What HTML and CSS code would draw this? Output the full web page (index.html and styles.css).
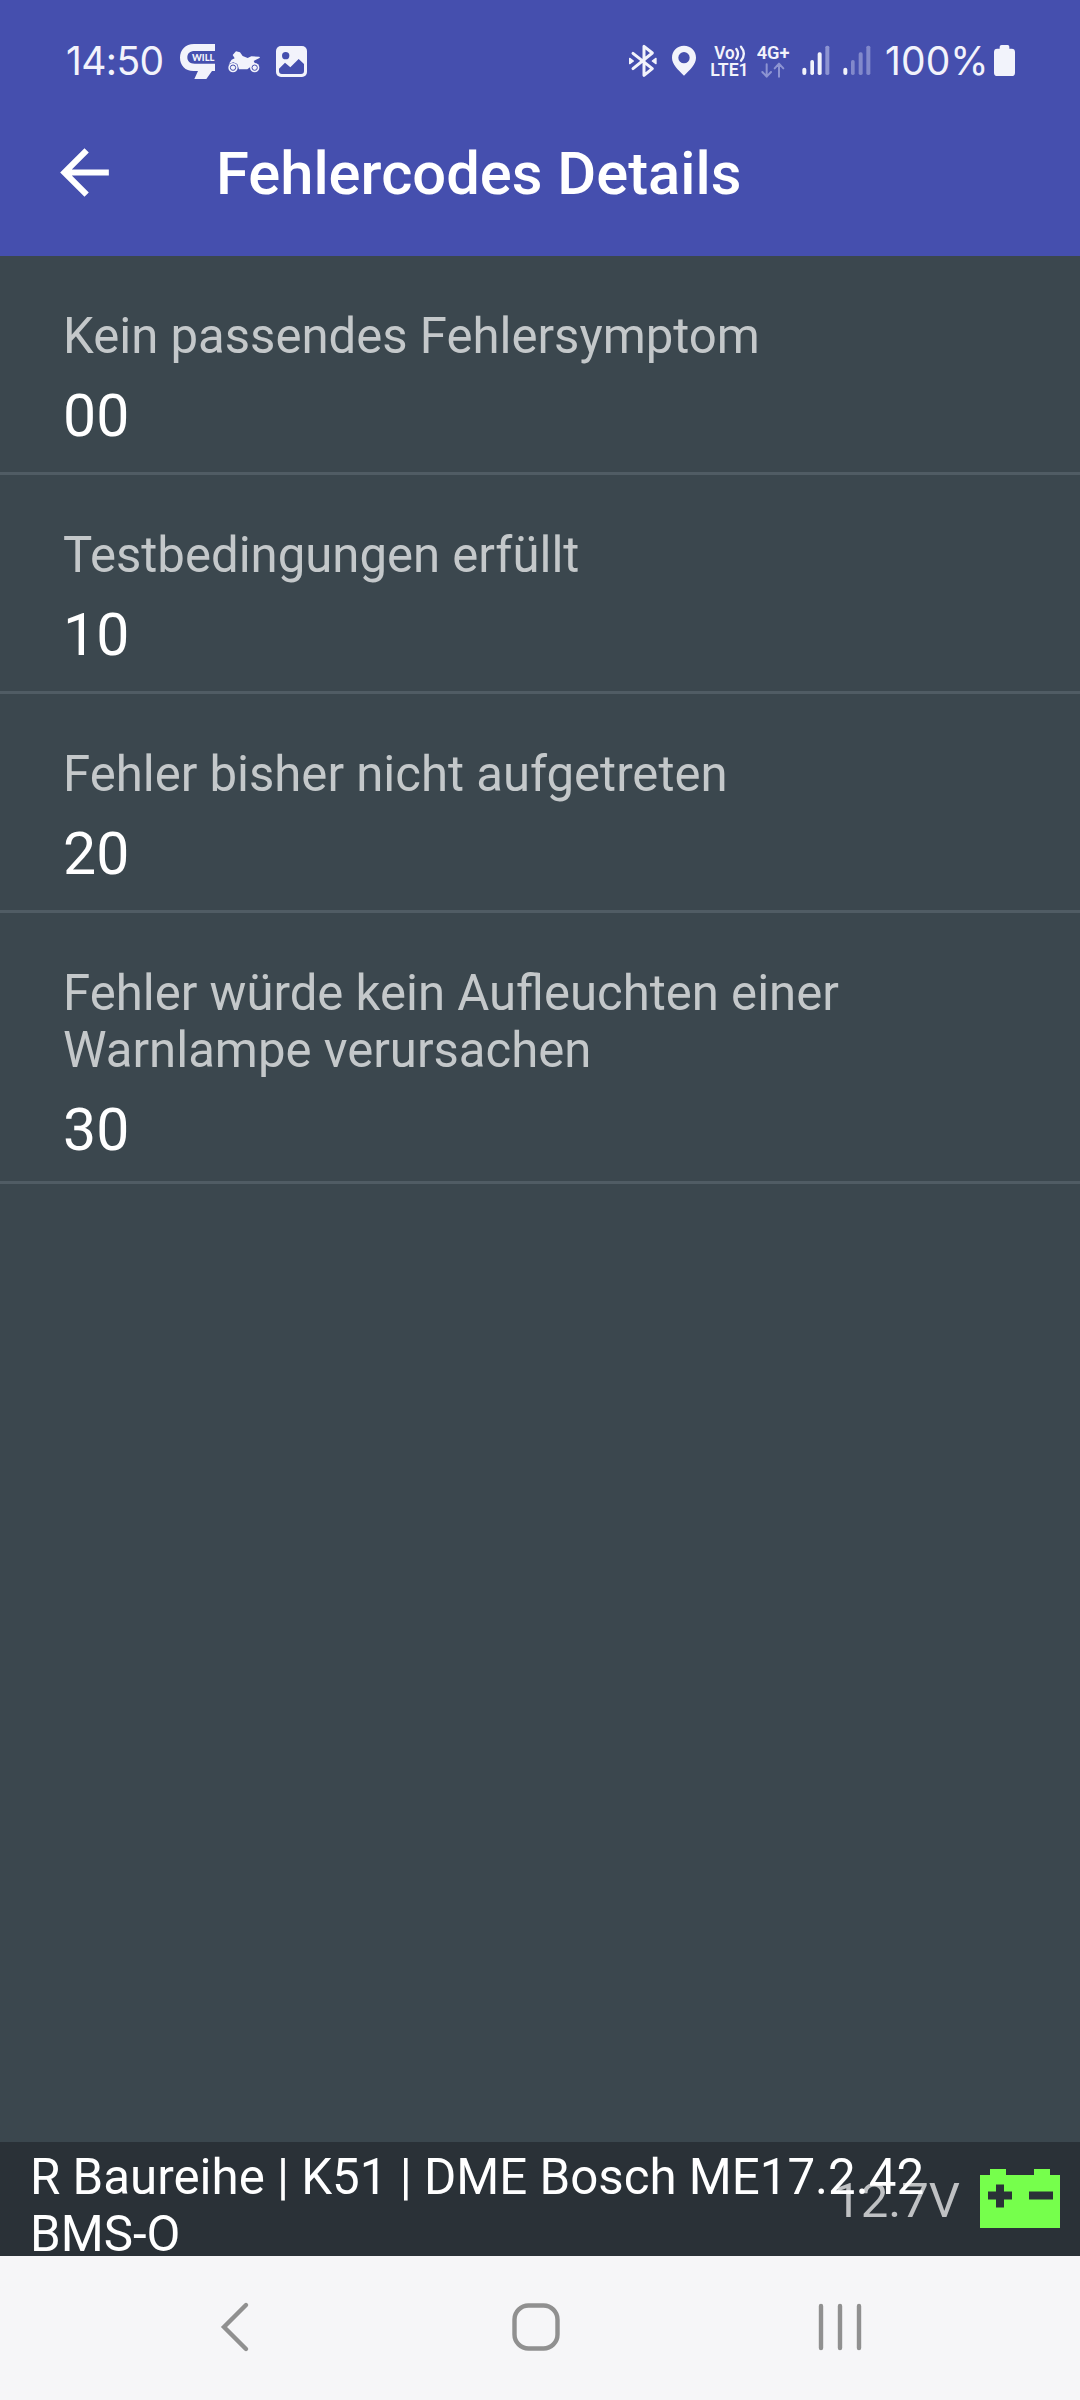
FILE: index.html
```html
<!DOCTYPE html>
<html lang="de">
<head>
<meta charset="utf-8">
<title>Fehlercodes Details</title>
<link rel="stylesheet" href="styles.css">
</head>
<body>
<div class="screen">
  <header class="header">
    <div class="status">
      <div class="status-group">
        <span class="clock">14:50</span>
        <svg class="icon-will" viewBox="420 0 105 240">
          <path fill="#f2f3fb" d="M525 72H462C436 72 420 90 420 113S436 153 460 153H474L463 177H499L516 153H525V131H464C450 131 442 124 442 112S450 93 464 93H525Z"/>
          <text class="will-text" x="456" y="122" textLength="67" lengthAdjust="spacingAndGlyphs">WILL</text>
        </svg>
        <svg class="icon-bike" viewBox="564 0 96 240">
          <g fill="#f2f3fb">
            <path d="M578 105L588 94L600 97L608 108L623 114L634 109L658 110L660 113L641 123L647 134L632 140L622 148H597L592 132L580 127L567 131L575 119L584 115Z"/>
            <circle cx="579" cy="143" r="14"/><circle cx="644" cy="143" r="14"/>
          </g>
          <g fill="none" stroke="#454fae" stroke-width="3"><circle cx="579" cy="143" r="8"/><circle cx="644" cy="143" r="8"/></g>
        </svg>
        <svg class="icon-photo" viewBox="708 0 93 240">
          <rect x="708" y="78" width="93" height="93" rx="15" fill="#f2f3fb"/>
          <circle cx="737" cy="107" r="11" fill="#454fae"/>
          <path fill="#454fae" d="M717 146L735 128L751 142L776 117L792 132V153Q792 162 783 162H726Q717 162 717 153Z"/>
        </svg>
      </div>
      <div class="status-group">
        <svg class="icon-bt" viewBox="52 0 90 240">
          <path fill="none" stroke="#f2f3fb" stroke-width="9" stroke-linejoin="round" stroke-linecap="round" d="M67 100L125 146L100 166V79L125 99L67 146"/>
          <path fill="#f2f3fb" stroke="#f2f3fb" stroke-width="4" stroke-linejoin="round" d="M57 115L68 123L57 131ZM136 115L125 123L136 131Z"/>
        </svg>
        <svg class="icon-pin" viewBox="186 0 72 240">
          <path fill="#f2f3fb" fill-rule="evenodd" d="M222 77C201 77 186 93 186 113C186 133 204 149 222 167C240 149 258 133 258 113C258 93 243 77 222 77ZM222 96A17 17 0 1 1 222 130A17 17 0 1 1 222 96Z"/>
        </svg>
        <svg class="icon-volte" viewBox="303 0 111 240">
          <text class="net-text" x="313" y="118" textLength="61" lengthAdjust="spacingAndGlyphs">Vo</text>
          <path fill="none" stroke="#f2f3fb" stroke-width="7" stroke-linecap="round" d="M379 87Q389 101 379 116M393 80Q410 101 393 122"/>
          <text class="net-text" x="301" y="169" textLength="115" lengthAdjust="spacingAndGlyphs">LTE1</text>
        </svg>
        <svg class="icon-4g" viewBox="441 0 99 240">
          <text class="net-text" x="440" y="118" textLength="99" lengthAdjust="spacingAndGlyphs">4G+</text>
          <path fill="none" stroke="#8d94d2" stroke-width="6" stroke-linecap="round" stroke-linejoin="round" d="M470 133V169M457 156L470 170L483 156M507 170V132M494 145L507 131L520 145"/>
        </svg>
        <svg class="icon-signal" viewBox="575 0 84 240">
          <g fill="#f2f3fb"><rect x="576" y="143" width="12" height="22" rx="6"/><rect x="600" y="120" width="11" height="45" rx="5"/><rect x="622" y="97" width="12" height="68" rx="5"/></g>
          <rect x="645" y="77" width="12" height="88" rx="5" fill="#8d94d2"/>
        </svg>
        <svg class="icon-signal signal-two" viewBox="698 0 84 240">
          <rect x="699" y="143" width="12" height="22" rx="6" fill="#f2f3fb"/>
          <g fill="#8289cb"><rect x="722" y="120" width="11" height="45" rx="5"/><rect x="745" y="97" width="12" height="68" rx="5"/><rect x="768" y="77" width="12" height="88" rx="5"/></g>
        </svg>
        <span class="percent">100%</span>
        <svg class="icon-batt" viewBox="642 0 63 240">
          <path fill="#f2f3fb" d="M659 80Q659 75 665 75H683Q688 75 688 80V86H695Q705 86 705 96V158Q705 168 695 168H652Q642 168 642 158V96Q642 86 652 86H659Z"/>
        </svg>
      </div>
    </div>
    <div class="toolbar">
      <svg class="back" viewBox="0 0 24 24"><path fill="#fff" d="M20 11H7.83l5.59-5.59L12 4l-8 8 8 8 1.41-1.41L7.83 13H20v-2z"/></svg>
      <h1 class="title">Fehlercodes Details</h1>
    </div>
  </header>
  <main class="list">
    <section class="row"><p class="label">Kein passendes Fehlersymptom</p><p class="value">00</p></section>
    <section class="row"><p class="label">Testbedingungen erfüllt</p><p class="value">10</p></section>
    <section class="row"><p class="label">Fehler bisher nicht aufgetreten</p><p class="value">20</p></section>
    <section class="row row-last"><p class="label">Fehler würde kein Aufleuchten einer<br>Warnlampe verursachen</p><p class="value">30</p></section>
  </main>
  <footer class="info">
    <p class="vehicle">R Baureihe | K51 | DME Bosch ME17.2.42<br>BMS-O</p>
    <div class="power">
      <span class="voltage">12.7V</span>
      <svg class="car-battery" viewBox="0 0 80 59">
        <path fill="#76ff4c" d="M0 6H10V0H26V6H54V0H70V6H80V59H0Z"/>
        <path fill="#2a3137" d="M16 15.5H24V22.5H32V30.5H24V38.5H16V30.5H8V22.5H16ZM49 22.5H73V30.5H49Z"/>
      </svg>
    </div>
  </footer>
  <nav class="nav">
    <svg class="nav-back" viewBox="0 0 30 52"><path d="M26 4L4 26L26 48"/></svg>
    <svg class="nav-home" viewBox="0 0 48 48"><rect x="2.5" y="2.5" width="43" height="43" rx="14"/></svg>
    <svg class="nav-recents" viewBox="0 0 44 48"><path d="M3 3V45M22 3V45M41 3V45"/></svg>
  </nav>
</div>
</body>
</html>
```
FILE: styles.css
```css
* { box-sizing: border-box; margin: 0; padding: 0; }
body { font-family: Roboto, "Liberation Sans", sans-serif; background: #3b474e; }
svg { display: block; flex: none; }
.screen { width: 1080px; height: 2400px; display: flex; flex-direction: column; overflow: hidden; }

.header { height: 256px; background: #454fae; color: #fff; }
.status { height: 100px; padding: 20px 65px 0 66px; display: flex; justify-content: space-between; }
.status-group { display: flex; }
.status-group svg { height: 80px; }
.clock, .percent { font-family: Inter, Roboto, sans-serif; font-size: 39px; line-height: 81px; color: #f2f3fb; white-space: nowrap; }
.clock { width: 114px; letter-spacing: -0.6px; }
.percent { width: 109px; margin-left: 14px; letter-spacing: 0.1px; }
.icon-will { width: 35px; }
.icon-bike { width: 32px; margin-left: 13px; }
.icon-photo { width: 31px; margin-left: 16px; }
.icon-bt { width: 30px; }
.icon-pin { width: 24px; margin-left: 14.67px; }
.icon-volte { width: 37px; margin-left: 15px; }
.icon-4g { width: 33px; margin-left: 9px; }
.icon-signal { width: 28px; margin-left: 11.67px; }
.signal-two { margin-left: 13px; }
.icon-batt { width: 21px; }
.will-text { font: 900 30px Lato, sans-serif; fill: #f2f3fb; }
.net-text { font: 600 53px Roboto, sans-serif; fill: #f2f3fb; }

.toolbar { display: flex; align-items: center; padding-left: 48px; height: 145px; }
.back { width: 73px; height: 73px; }
.title { margin-left: 95px; padding-top: 3px; font-size: 59.7px; font-weight: 500; line-height: 70px; white-space: nowrap; }

.list { flex: 1; }
.row { height: 219px; padding: 52px 63px 0; border-bottom: 3px solid #505c64; }
.row-last { height: 271px; }
.label { font-size: 49.1px; line-height: 57px; color: #c4c8ca; }
.value { margin-top: 16px; font-size: 59px; line-height: 69px; color: #fff; }

.info { position: relative; height: 114px; background: #2a3137; }
.vehicle { padding: 7px 0 0 30px; font-size: 49.25px; line-height: 57px; color: #fff; white-space: nowrap; position: relative; z-index: 1; }
.power { position: absolute; right: 20px; top: 0; height: 112px; display: flex; align-items: center; gap: 20px; }
.voltage { padding-top: 4px; font-size: 49px; color: #bfc1c3; }
.car-battery { width: 80px; height: 59px; }

.nav { height: 144px; background: #f6f6f8; display: flex; align-items: center; padding: 0 218px 2px 220px; justify-content: space-between; }
.nav svg { fill: none; stroke: #909090; stroke-width: 4.4; stroke-linecap: round; }
.nav-back { width: 30px; height: 52px; }
.nav-home { width: 48px; height: 48px; position: relative; left: 2px; }
.nav-recents { width: 44px; height: 48px; }
```
